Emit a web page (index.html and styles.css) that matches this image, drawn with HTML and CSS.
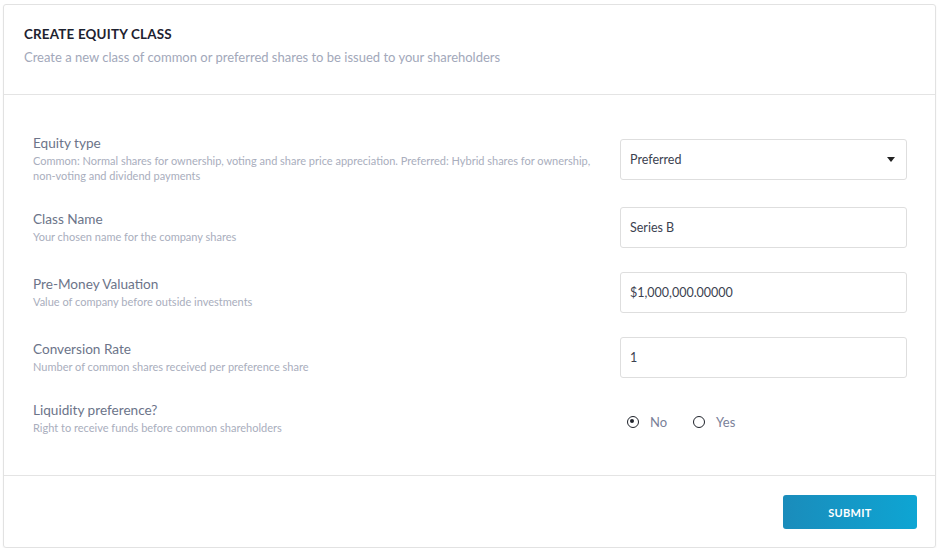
FILE: index.html
```html
<!DOCTYPE html>
<html>
<head>
<meta charset="utf-8">
<link rel="stylesheet" href="styles.css">
</head>
<body>
<div class="card">
  <div class="card-header">
    <h1 class="title">CREATE EQUITY CLASS</h1>
    <p class="subtitle">Create a new class of common or preferred shares to be issued to your shareholders</p>
  </div>
  <div class="card-body">
    <div class="row">
      <div class="info">
        <div class="label">Equity type</div>
        <div class="desc">Common: Normal shares for ownership, voting and share price appreciation. Preferred: Hybrid shares for ownership, non-voting and dividend payments</div>
      </div>
      <div class="control">
        <div class="field select"><span>Preferred</span>
          <svg class="caret" width="8" height="5" viewBox="0 0 8 5"><path d="M0 0h8L4 5z" fill="#222"/></svg>
        </div>
      </div>
    </div>
    <div class="row">
      <div class="info">
        <div class="label">Class Name</div>
        <div class="desc">Your chosen name for the company shares</div>
      </div>
      <div class="control"><div class="field">Series B</div></div>
    </div>
    <div class="row">
      <div class="info">
        <div class="label">Pre-Money Valuation</div>
        <div class="desc">Value of company before outside investments</div>
      </div>
      <div class="control"><div class="field">$1,000,000.00000</div></div>
    </div>
    <div class="row">
      <div class="info">
        <div class="label">Conversion Rate</div>
        <div class="desc">Number of common shares received per preference share</div>
      </div>
      <div class="control"><div class="field">1</div></div>
    </div>
    <div class="row">
      <div class="info">
        <div class="label">Liquidity preference?</div>
        <div class="desc">Right to receive funds before common shareholders</div>
      </div>
      <div class="control radios">
        <label class="radio"><span class="dot checked"></span>No</label>
        <label class="radio"><span class="dot"></span>Yes</label>
      </div>
    </div>
  </div>
  <div class="card-footer">
    <button class="submit">SUBMIT</button>
  </div>
</div>
</body>
</html>
```
FILE: styles.css
```css
* { box-sizing: border-box; }
html, body { margin: 0; padding: 0; background: #fff; }
body {
  font-family: Lato, "Open Sans", "Liberation Sans", sans-serif;
  padding: 4px 4px 0 3px;
}
.card {
  width: 933px;
  height: 544px;
  border: 1px solid #e2e2e2;
  border-radius: 3px;
  box-shadow: 0 1px 2px rgba(0,0,0,0.06);
  display: flex;
  flex-direction: column;
}
.card-header {
  padding: 21px 20px 0 20px;
  height: 90px;
  border-bottom: 1px solid #e4e4e4;
}
.title {
  margin: 0;
  font-size: 13.4px;
  font-weight: 700;
  letter-spacing: 0.2px;
  color: #1d2230;
  line-height: 16px;
}
.subtitle {
  margin: 7px 0 0;
  font-size: 13px;
  color: #a2a8ba;
  line-height: 16px;
}
.card-body {
  flex: 1;
  padding: 40px 28px 0 29px;
  display: flex;
  flex-direction: column;
  gap: 24px;
  border-bottom: 1px solid #e4e4e4;
}
.row {
  display: flex;
  align-items: center;
  gap: 12px;
}
.info { flex: 1; }
.label {
  font-size: 13.6px;
  color: #6c7489;
  line-height: 16px;
  margin-bottom: 2px;
}
.desc {
  font-size: 11px;
  color: #a9aebd;
  line-height: 15px;
}
.control { width: 287px; flex: none; }
.field {
  height: 41px;
  border: 1px solid #dedede;
  border-radius: 3px;
  padding: 0 9px;
  display: flex;
  align-items: center;
  font-size: 12.5px;
  color: #3c4250;
}
.select { justify-content: space-between; padding-right: 11px; }
.caret { display: block; }
.radios {
  display: flex;
  gap: 26px;
  padding-left: 7px;
  padding-top: 7px;
}
.radio {
  display: flex;
  align-items: center;
  gap: 11px;
  font-size: 13px;
  color: #7a8199;
}
.dot {
  width: 12px;
  height: 12px;
  border: 1.6px solid #1f232b;
  border-radius: 50%;
  position: relative;
}
.dot.checked::after {
  content: "";
  position: absolute;
  left: 2.4px; top: 2.4px;
  width: 4px; height: 4px;
  border-radius: 50%;
  background: #1f232b;
}
.card-footer {
  height: 71px;
  padding: 19px 18px 0 0;
  display: flex;
  justify-content: flex-end;
  align-items: flex-start;
}
.submit {
  width: 134px;
  height: 34px;
  border: none;
  border-radius: 3px;
  background: linear-gradient(90deg, #1a8cbb, #0ea5d3);
  color: #fff;
  font-family: inherit;
  font-size: 11px;
  font-weight: 700;
  letter-spacing: 0.3px;
}
```
